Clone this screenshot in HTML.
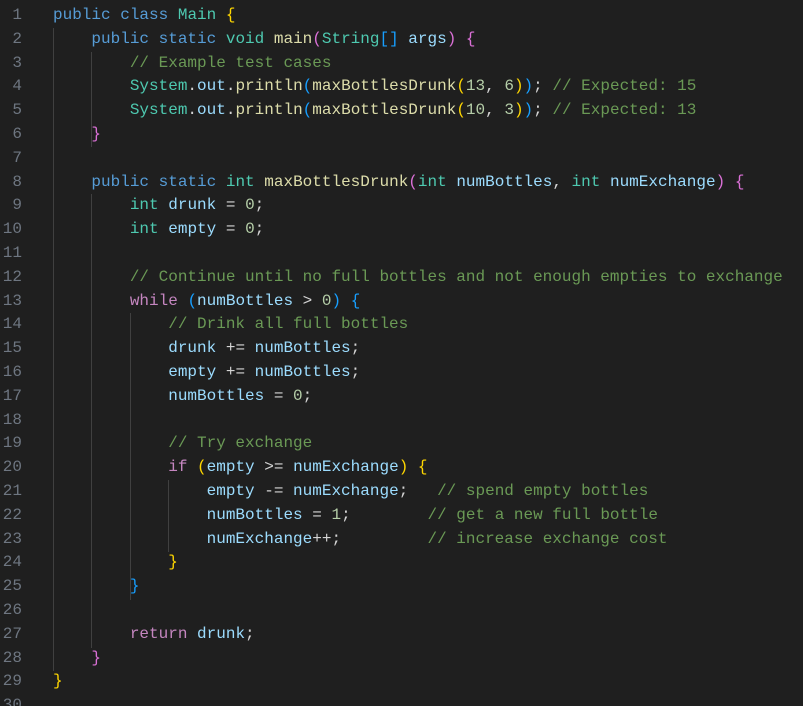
<!DOCTYPE html>
<html><head><meta charset="utf-8"><style>
html,body{margin:0;padding:0;background:#1f1f1f;width:803px;height:706px;overflow:hidden}
#ed{position:relative;width:803px;height:706px;font-family:"Liberation Mono",monospace;font-size:16px}
.ln{position:absolute;left:0;width:22px;text-align:right;color:#6e7681;height:23.8px;line-height:23.8px}
.c{position:absolute;left:53px;white-space:pre;color:#d4d4d4;height:23.8px;line-height:23.8px}
.g{position:absolute;width:1px;background:#404040}
.k{color:#569cd6}.p{color:#c586c0}.t{color:#4ec9b0}.f{color:#dcdcaa}.v{color:#9cdcfe}.n{color:#b5cea8}.cm{color:#6a9955}
.b1{color:#ffd700}.b2{color:#da70d6}.b3{color:#179fff}
</style></head><body><div id="ed">
<div class="g" style="left:53px;top:28px;height:643px"></div>
<div class="g" style="left:91px;top:52px;height:95px"></div>
<div class="g" style="left:91px;top:194px;height:454px"></div>
<div class="g" style="left:130px;top:313px;height:287px"></div>
<div class="g" style="left:168px;top:480px;height:72px"></div>
<div id="lines"></div>
<script>
const L=[
'<span class="k">public</span> <span class="k">class</span> <span class="t">Main</span> <span class="b1">{</span>',
'    <span class="k">public</span> <span class="k">static</span> <span class="t">void</span> <span class="f">main</span><span class="b2">(</span><span class="t">String</span><span class="b3">[]</span> <span class="v">args</span><span class="b2">)</span> <span class="b2">{</span>',
'        <span class="cm">// Example test cases</span>',
'        <span class="t">System</span>.<span class="v">out</span>.<span class="f">println</span><span class="b3">(</span><span class="f">maxBottlesDrunk</span><span class="b1">(</span><span class="n">13</span>, <span class="n">6</span><span class="b1">)</span><span class="b3">)</span>; <span class="cm">// Expected: 15</span>',
'        <span class="t">System</span>.<span class="v">out</span>.<span class="f">println</span><span class="b3">(</span><span class="f">maxBottlesDrunk</span><span class="b1">(</span><span class="n">10</span>, <span class="n">3</span><span class="b1">)</span><span class="b3">)</span>; <span class="cm">// Expected: 13</span>',
'    <span class="b2">}</span>',
'',
'    <span class="k">public</span> <span class="k">static</span> <span class="t">int</span> <span class="f">maxBottlesDrunk</span><span class="b2">(</span><span class="t">int</span> <span class="v">numBottles</span>, <span class="t">int</span> <span class="v">numExchange</span><span class="b2">)</span> <span class="b2">{</span>',
'        <span class="t">int</span> <span class="v">drunk</span> = <span class="n">0</span>;',
'        <span class="t">int</span> <span class="v">empty</span> = <span class="n">0</span>;',
'',
'        <span class="cm">// Continue until no full bottles and not enough empties to exchange</span>',
'        <span class="p">while</span> <span class="b3">(</span><span class="v">numBottles</span> &gt; <span class="n">0</span><span class="b3">)</span> <span class="b3">{</span>',
'            <span class="cm">// Drink all full bottles</span>',
'            <span class="v">drunk</span> += <span class="v">numBottles</span>;',
'            <span class="v">empty</span> += <span class="v">numBottles</span>;',
'            <span class="v">numBottles</span> = <span class="n">0</span>;',
'',
'            <span class="cm">// Try exchange</span>',
'            <span class="p">if</span> <span class="b1">(</span><span class="v">empty</span> &gt;= <span class="v">numExchange</span><span class="b1">)</span> <span class="b1">{</span>',
'                <span class="v">empty</span> -= <span class="v">numExchange</span>;   <span class="cm">// spend empty bottles</span>',
'                <span class="v">numBottles</span> = <span class="n">1</span>;        <span class="cm">// get a new full bottle</span>',
'                <span class="v">numExchange</span>++;         <span class="cm">// increase exchange cost</span>',
'            <span class="b1">}</span>',
'        <span class="b3">}</span>',
'',
'        <span class="p">return</span> <span class="v">drunk</span>;',
'    <span class="b2">}</span>',
'<span class="b1">}</span>',
''];
let h='';
L.forEach((s,i)=>{const top=4+i*23.8;h+=`<div class="ln" style="top:${top}px">${i+1}</div><div class="c" style="top:${top}px">${s}</div>`;});
document.getElementById('lines').innerHTML=h;
</script>
</div></body></html>
